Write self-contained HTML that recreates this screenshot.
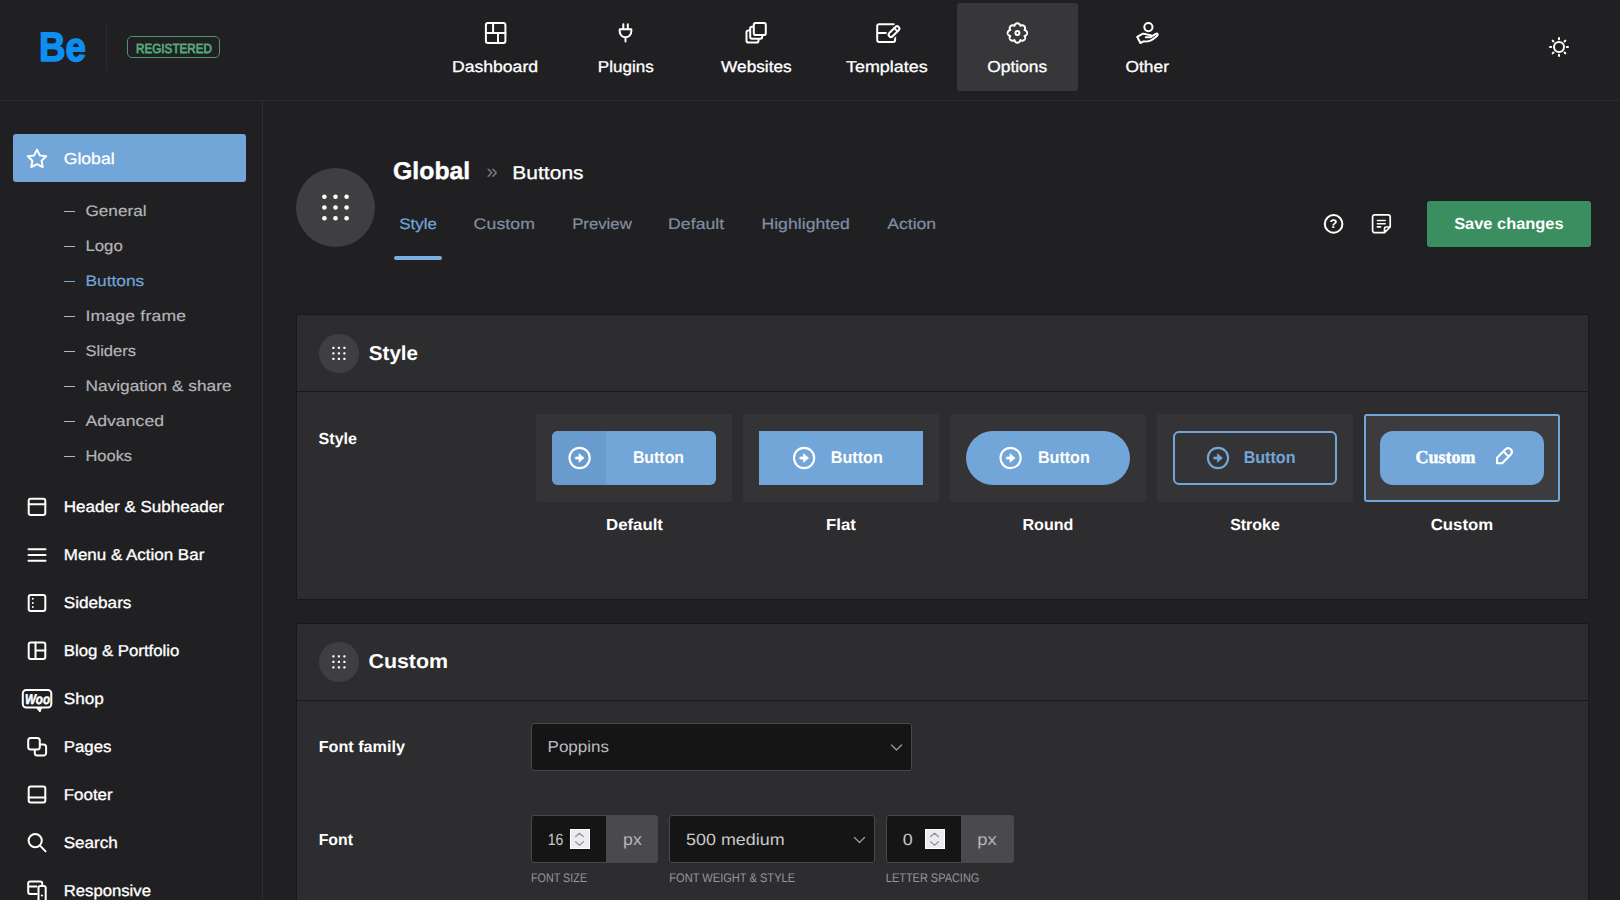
<!DOCTYPE html>
<html><head><meta charset="utf-8"><title>Betheme Options</title>
<style>
*{margin:0;padding:0;box-sizing:border-box}
html,body{width:1620px;height:900px;overflow:hidden;background:#202022;font-family:"Liberation Sans",sans-serif}
.t{position:absolute;white-space:pre;font-family:"Liberation Sans",sans-serif;text-rendering:geometricPrecision}
.b{position:absolute}
svg{position:absolute;overflow:visible}
</style></head><body>
<!-- header -->
<div class="b" style="left:0;top:100px;width:1620px;height:1px;background:#2c2c2e"></div>
<div class="b" style="left:262px;top:101px;width:1px;height:799px;background:#2c2c2e"></div>
<div class="b" style="left:106px;top:24px;width:1px;height:46px;background:#2c2c2e"></div>
<div class="b" style="left:127px;top:36px;width:93px;height:22px;border:1.6px solid #4d9470;border-radius:5px"></div>
<div class="b" style="left:957px;top:3.3px;width:120.5px;height:87.4px;background:#373739;border-radius:3px"></div>
<!-- sidebar active -->
<div class="b" style="left:13px;top:134px;width:233px;height:48px;background:#72a5d8;border-radius:3px"></div>
<div class="b" style="left:64.2px;top:210.55px;width:11.2px;height:1.3px;background:#b4b4b8"></div>
<div class="b" style="left:64.2px;top:245.55px;width:11.2px;height:1.3px;background:#b4b4b8"></div>
<div class="b" style="left:64.2px;top:280.55px;width:11.2px;height:1.3px;background:#72a5d8"></div>
<div class="b" style="left:64.2px;top:315.55px;width:11.2px;height:1.3px;background:#b4b4b8"></div>
<div class="b" style="left:64.2px;top:350.55px;width:11.2px;height:1.3px;background:#b4b4b8"></div>
<div class="b" style="left:64.2px;top:385.55px;width:11.2px;height:1.3px;background:#b4b4b8"></div>
<div class="b" style="left:64.2px;top:420.55px;width:11.2px;height:1.3px;background:#b4b4b8"></div>
<div class="b" style="left:64.2px;top:455.55px;width:11.2px;height:1.3px;background:#b4b4b8"></div>
<!-- title -->
<div class="b" style="left:296px;top:167.9px;width:79.2px;height:79.2px;border-radius:50%;background:#3f3f41"></div>
<div class="b" style="left:394px;top:256.3px;width:47.8px;height:3.3px;border-radius:2px;background:#7cade0"></div>
<div class="b" style="left:1427px;top:201px;width:164px;height:46px;border-radius:3px;background:#3a8e60"></div>
<!-- panels -->
<div class="b" style="left:296px;top:314px;width:1293px;height:286px;background:#2d2d2f;border:1px solid #18181a;border-radius:2px"></div>
<div class="b" style="left:297px;top:391px;width:1291px;height:1px;background:#18181a"></div>
<div class="b" style="left:296px;top:623px;width:1293px;height:290px;background:#2d2d2f;border:1px solid #18181a;border-radius:2px"></div>
<div class="b" style="left:297px;top:700px;width:1291px;height:1px;background:#18181a"></div>
<div class="b" style="left:319.2px;top:333.5px;width:39.5px;height:39.5px;border-radius:50%;background:#3f3f41"></div>
<div class="b" style="left:319.2px;top:642px;width:39.5px;height:39.5px;border-radius:50%;background:#3f3f41"></div>
<!-- cards -->
<div class="b" style="left:536px;top:414px;width:196px;height:88px;background:#343436;border-radius:2px"></div>
<div class="b" style="left:743px;top:414px;width:196px;height:88px;background:#343436;border-radius:2px"></div>
<div class="b" style="left:950px;top:414px;width:196px;height:88px;background:#343436;border-radius:2px"></div>
<div class="b" style="left:1157px;top:414px;width:196px;height:88px;background:#343436;border-radius:2px"></div>
<div class="b" style="left:1364px;top:414px;width:196px;height:88px;background:#3c3c3e;border:2px solid #72a5d8;border-radius:3px"></div>
<!-- buttons -->
<div class="b" style="left:552px;top:430.5px;width:164px;height:54.5px;background:#72a5d8;border-radius:6px;overflow:hidden"><div style="width:54px;height:54px;background:#6a9bce"></div></div>
<div class="b" style="left:759px;top:430.5px;width:164px;height:54.5px;background:#72a5d8"></div>
<div class="b" style="left:966px;top:430.5px;width:164px;height:54.5px;background:#72a5d8;border-radius:27px"></div>
<div class="b" style="left:1173px;top:430.5px;width:164px;height:54.5px;border:2px solid #72a5d8;border-radius:6px"></div>
<div class="b" style="left:1380px;top:430.5px;width:164px;height:54.5px;background:#72a5d8;border-radius:13px"></div>
<!-- inputs -->
<div class="b" style="left:531px;top:723px;width:381px;height:48px;background:#151515;border:1px solid #48484b;border-radius:3px"></div>
<div class="b" style="left:531px;top:815px;width:127px;height:48px;background:#4a4a4e;border:1px solid #48484b;border-radius:3px"></div>
<div class="b" style="left:532px;top:816px;width:74px;height:46px;background:#151515;border-radius:2px 0 0 2px"></div>
<div class="b" style="left:669px;top:815px;width:206px;height:48px;background:#151515;border:1px solid #48484b;border-radius:3px"></div>
<div class="b" style="left:886px;top:815px;width:128px;height:48px;background:#4a4a4e;border:1px solid #48484b;border-radius:3px"></div>
<div class="b" style="left:887px;top:816px;width:74px;height:46px;background:#151515;border-radius:2px 0 0 2px"></div>
<div class="b" style="left:569.5px;top:829px;width:20px;height:20px;background:#ebebf0;border:1px solid #fff"></div>
<div class="b" style="left:924.5px;top:829px;width:20px;height:20px;background:#ebebf0;border:1px solid #fff"></div>
<!-- SVG overlay: all icons -->
<svg width="1620" height="900" viewBox="0 0 1620 900" style="left:0;top:0" fill="none" stroke="#fff" stroke-width="2" stroke-linecap="round" stroke-linejoin="round">
<!-- dashboard -->
<rect x="485.9" y="22.9" width="19.5" height="20.2" rx="2"/><path d="M485.9 33.1H505.4M493.1 22.9V33.1M498 33.1V43.1"/>
<!-- plugins -->
<path d="M623.3 24.3V29.3M627.8 24.3V29.3M619.7 29.3H631.3M619.7 29.3V31.5A5.8 5.8 0 0 0 631.3 31.5V29.3M625.5 37.3V41.6"/>
<!-- websites -->
<g fill="#202022"><rect x="746.5" y="30.5" width="12" height="12" rx="1.8"/><rect x="750.2" y="26.8" width="12" height="12" rx="1.8"/><rect x="753.8" y="23.1" width="12" height="12" rx="1.8"/></g>
<!-- templates -->
<path d="M895.1 27V26.3A2 2 0 0 0 893.1 24.3H879.2A2 2 0 0 0 877.2 26.3V39.9A2 2 0 0 0 879.2 41.9H893.1A2 2 0 0 0 895.1 39.9V34M877.2 33.1H889"/>
<g transform="translate(894 31.6) rotate(-45)"><rect x="-6.6" y="-2.3" width="13.2" height="4.6" rx="2.3" fill="#202022" stroke="#202022" stroke-width="5"/><rect x="-6.6" y="-2.3" width="13.2" height="4.6" rx="2.3" fill="#202022"/><path d="M2.6 -2.3V2.3"/></g>
<!-- options gear -->
<path d="M1027.10 33.00L1027.07 33.38L1027.00 33.76L1026.87 34.12L1026.69 34.47L1026.46 34.80L1026.19 35.11L1025.88 35.39L1025.51 35.64L1025.09 35.84L1024.51 35.95L1024.84 36.43L1025.00 36.87L1025.08 37.30L1025.11 37.72L1025.08 38.13L1025.01 38.53L1024.89 38.90L1024.72 39.25L1024.51 39.57L1024.26 39.86L1023.97 40.11L1023.65 40.32L1023.30 40.49L1022.93 40.61L1022.53 40.68L1022.12 40.71L1021.70 40.68L1021.27 40.60L1020.83 40.44L1020.35 40.11L1020.24 40.69L1020.04 41.11L1019.79 41.48L1019.51 41.79L1019.20 42.06L1018.87 42.29L1018.52 42.47L1018.16 42.60L1017.78 42.67L1017.40 42.70L1017.02 42.67L1016.64 42.60L1016.28 42.47L1015.93 42.29L1015.60 42.06L1015.29 41.79L1015.01 41.48L1014.76 41.11L1014.56 40.69L1014.45 40.11L1013.97 40.44L1013.53 40.60L1013.10 40.68L1012.68 40.71L1012.27 40.68L1011.87 40.61L1011.50 40.49L1011.15 40.32L1010.83 40.11L1010.54 39.86L1010.29 39.57L1010.08 39.25L1009.91 38.90L1009.79 38.53L1009.72 38.13L1009.69 37.72L1009.72 37.30L1009.80 36.87L1009.96 36.43L1010.29 35.95L1009.71 35.84L1009.29 35.64L1008.92 35.39L1008.61 35.11L1008.34 34.80L1008.11 34.47L1007.93 34.12L1007.80 33.76L1007.73 33.38L1007.70 33.00L1007.73 32.62L1007.80 32.24L1007.93 31.88L1008.11 31.53L1008.34 31.20L1008.61 30.89L1008.92 30.61L1009.29 30.36L1009.71 30.16L1010.29 30.05L1009.96 29.57L1009.80 29.13L1009.72 28.70L1009.69 28.28L1009.72 27.87L1009.79 27.47L1009.91 27.10L1010.08 26.75L1010.29 26.43L1010.54 26.14L1010.83 25.89L1011.15 25.68L1011.50 25.51L1011.87 25.39L1012.27 25.32L1012.68 25.29L1013.10 25.32L1013.53 25.40L1013.97 25.56L1014.45 25.89L1014.56 25.31L1014.76 24.89L1015.01 24.52L1015.29 24.21L1015.60 23.94L1015.93 23.71L1016.28 23.53L1016.64 23.40L1017.02 23.33L1017.40 23.30L1017.78 23.33L1018.16 23.40L1018.52 23.53L1018.87 23.71L1019.20 23.94L1019.51 24.21L1019.79 24.52L1020.04 24.89L1020.24 25.31L1020.35 25.89L1020.83 25.56L1021.27 25.40L1021.70 25.32L1022.12 25.29L1022.53 25.32L1022.93 25.39L1023.30 25.51L1023.65 25.68L1023.97 25.89L1024.26 26.14L1024.51 26.43L1024.72 26.75L1024.89 27.10L1025.01 27.47L1025.08 27.87L1025.11 28.28L1025.08 28.70L1025.00 29.13L1024.84 29.57L1024.51 30.05L1025.09 30.16L1025.51 30.36L1025.88 30.61L1026.19 30.89L1026.46 31.20L1026.69 31.53L1026.87 31.88L1027.00 32.24L1027.07 32.62Z"/>
<circle cx="1017.4" cy="33" r="2"/>
<!-- other -->
<circle cx="1148.4" cy="27.1" r="4.1"/>
<path d="M1140.4 43L1137.2 36.8L1142.5 33.8C1145 33.5 1147 34.6 1150 35C1152 35.3 1151.8 37.3 1150 37.3L1145.8 37.3M1150.8 36.9L1155.8 33.8C1157.5 33 1158.4 34.6 1157.2 35.7C1154 38.6 1151 41 1148 41.3L1143 41.6L1140.4 43"/>
<!-- sun -->
<circle cx="1559" cy="47" r="5"/>
<path d="M1566.80 47.00L1568.00 47.00M1564.52 52.52L1565.36 53.36M1559.00 54.80L1559.00 56.00M1553.48 52.52L1552.64 53.36M1551.20 47.00L1550.00 47.00M1553.48 41.48L1552.64 40.64M1559.00 39.20L1559.00 38.00M1564.52 41.48L1565.36 40.64"/>
<!-- star -->
<path d="M37 149.6L39.8 155.4L46.2 156.3L41.6 160.8L42.7 167.1L37 164.1L31.3 167.1L32.4 160.8L27.8 156.3L34.2 155.4Z"/>
<!-- header -->
<rect x="28.7" y="498.7" width="16.6" height="16.4" rx="2"/><path d="M28.7 504.2H45.3"/>
<!-- menu -->
<path d="M28.5 549.2H45.5M28.5 555H45.5M28.5 560.8H45.5"/>
<!-- sidebars -->
<rect x="28.7" y="594.9" width="16.6" height="16.2" rx="2"/>
<!-- blog -->
<rect x="28.7" y="642.5" width="16.6" height="16.6" rx="2"/><path d="M35.5 642.5V659.1M35.5 650.4H45.3"/>
<!-- woo -->
<rect x="22.8" y="689.9" width="28.5" height="17.7" rx="3.5"/><path d="M36.6 708L40 712L41.5 708Z" fill="#fff" stroke-width="1"/>
<!-- pages -->
<rect x="28.2" y="737.9" width="11.6" height="11.6" rx="2.5"/><path d="M40.7 744.5H43.6A2.5 2.5 0 0 1 46.1 747V753.1A2.5 2.5 0 0 1 43.6 755.6H37.3A2.5 2.5 0 0 1 34.8 753.1V750.4"/>
<!-- footer -->
<rect x="28.7" y="786.6" width="16.6" height="16" rx="2"/><path d="M28.7 797.5H45.3"/>
<!-- search -->
<circle cx="35.2" cy="840.6" r="6.6"/><path d="M40 845.6L45.6 851.4"/>
<!-- responsive -->
<path d="M42.2 884.5V883.5A2 2 0 0 0 40.2 881.5H30.2A2 2 0 0 0 28.2 883.5V891.9A2 2 0 0 0 30.2 893.9H36.6M28.2 886.6H36.6"/>
<rect x="38.5" y="886.1" width="7.2" height="16" rx="2"/>
<!-- help -->
<circle cx="1333.6" cy="223.9" r="8.8"/>
<!-- note -->
<path d="M1390.2 227V217A2.2 2.2 0 0 0 1388 214.8H1374.8A2.2 2.2 0 0 0 1372.6 217V230.5A2.2 2.2 0 0 0 1374.8 232.7H1384.5L1390.2 227H1386A1.5 1.5 0 0 0 1384.5 228.5V232.7" stroke-width="1.7"/>
<path d="M1377.4 220.5H1385.2M1377.4 223.7H1385.2M1377.4 226.9H1380.6" stroke-width="1.6"/>
<!-- arrow circles -->
<g stroke-width="2.1">
<circle cx="579.6" cy="458" r="10.1" fill="none"/><path d="M575.7 457.0H579.0V453.7L584.1 458L579.0 462.3V459.0H575.7Z" fill="#fff" stroke-width="0.7"/>
<circle cx="804.1" cy="458" r="10.1" fill="none"/><path d="M800.2 457.0H803.5V453.7L808.6 458L803.5 462.3V459.0H800.2Z" fill="#fff" stroke-width="0.7"/>
<circle cx="1010.6" cy="458" r="10.1" fill="none"/><path d="M1006.7 457.0H1010.0V453.7L1015.1 458L1010.0 462.3V459.0H1006.7Z" fill="#fff" stroke-width="0.7"/>
<g stroke="#72a5d8"><circle cx="1218" cy="458" r="10.1" fill="none"/><path d="M1214.1 457.0H1217.4V453.7L1222.5 458L1217.4 462.3V459.0H1214.1Z" fill="#72a5d8" stroke-width="0.7"/></g>
<!-- pencil -->
<path d="M1497 463.2V457.8L1505.8 449A3.7 3.7 0 0 1 1511 454.2L1502.3 463.2ZM1503.6 451.6L1508.6 456.6"/>
</g>
<!-- chevrons -->
<g stroke="#969696" stroke-width="1.4">
<path d="M891.5 745L896.5 750L901.5 745"/>
<path d="M854.5 837.5L859.5 842.5L864.5 837.5"/>
</g>
<g stroke="#9696a0" stroke-width="1.3">
<path d="M575.6 836.6L579.5 833.2L583.4 836.6M575.6 841.8L579.5 845.2L583.4 841.8"/>
<path d="M930.6 836.6L934.5 833.2L938.4 836.6M930.6 841.8L934.5 845.2L938.4 841.8"/>
</g>
<!-- dots -->
<g fill="#fff" stroke="none">
<circle cx="324.4" cy="196.7" r="2.3"/><circle cx="335.5" cy="196.7" r="2.3"/><circle cx="346.6" cy="196.7" r="2.3"/>
<circle cx="324.4" cy="207.5" r="2.3"/><circle cx="335.5" cy="207.5" r="2.3"/><circle cx="346.6" cy="207.5" r="2.3"/>
<circle cx="324.4" cy="218.3" r="2.3"/><circle cx="335.5" cy="218.3" r="2.3"/><circle cx="346.6" cy="218.3" r="2.3"/>
<circle cx="32.8" cy="598.8" r="1"/><circle cx="32.8" cy="602.9" r="1"/><circle cx="32.8" cy="607" r="1"/>
<circle cx="41.9" cy="895.5" r="1.1"/>
<rect x="332.25" y="346.65" width="2.3" height="2.3" rx="0.8"/><rect x="332.25" y="352.15" width="2.3" height="2.3" rx="0.8"/><rect x="332.25" y="357.65" width="2.3" height="2.3" rx="0.8"/><rect x="337.75" y="346.65" width="2.3" height="2.3" rx="0.8"/><rect x="337.75" y="352.15" width="2.3" height="2.3" rx="0.8"/><rect x="337.75" y="357.65" width="2.3" height="2.3" rx="0.8"/><rect x="343.25" y="346.65" width="2.3" height="2.3" rx="0.8"/><rect x="343.25" y="352.15" width="2.3" height="2.3" rx="0.8"/><rect x="343.25" y="357.65" width="2.3" height="2.3" rx="0.8"/><rect x="332.25" y="655.15" width="2.3" height="2.3" rx="0.8"/><rect x="332.25" y="660.65" width="2.3" height="2.3" rx="0.8"/><rect x="332.25" y="666.15" width="2.3" height="2.3" rx="0.8"/><rect x="337.75" y="655.15" width="2.3" height="2.3" rx="0.8"/><rect x="337.75" y="660.65" width="2.3" height="2.3" rx="0.8"/><rect x="337.75" y="666.15" width="2.3" height="2.3" rx="0.8"/><rect x="343.25" y="655.15" width="2.3" height="2.3" rx="0.8"/><rect x="343.25" y="660.65" width="2.3" height="2.3" rx="0.8"/><rect x="343.25" y="666.15" width="2.3" height="2.3" rx="0.8"/>
</g>
</svg>

<svg width="1620" height="900" viewBox="0 0 1620 900" style="left:0;top:0;text-rendering:geometricPrecision" font-family="Liberation Sans, sans-serif" stroke-linejoin="round">
<text transform="translate(38.95 60.60) scale(1 1.1180)" font-size="36.67" fill="#0d8ff2" font-weight="700" stroke="#0d8ff2" stroke-width="1.3">Be</text>
<text transform="translate(136.07 52.60) scale(1 1.1297)" font-size="11.68" fill="#55a87a" stroke="#55a87a" stroke-width="0.7">REGISTERED</text>
<text transform="translate(451.91 72.00) scale(1 0.8973)" font-size="17.61" fill="#ffffff" stroke="#ffffff" stroke-width="0.35">Dashboard</text>
<text transform="translate(597.83 72.00) scale(1 0.9282)" font-size="17.02" fill="#ffffff" stroke="#ffffff" stroke-width="0.35">Plugins</text>
<text transform="translate(721.12 72.00) scale(1 0.9173)" font-size="17.23" fill="#ffffff" stroke="#ffffff" stroke-width="0.35">Websites</text>
<text transform="translate(845.99 72.00) scale(1 0.8821)" font-size="17.91" fill="#ffffff" stroke="#ffffff" stroke-width="0.35">Templates</text>
<text transform="translate(987.22 72.00) scale(1 0.9087)" font-size="17.39" fill="#ffffff" stroke="#ffffff" stroke-width="0.35">Options</text>
<text transform="translate(1125.52 72.00) scale(1 0.9100)" font-size="17.36" fill="#ffffff" stroke="#ffffff" stroke-width="0.35">Other</text>
<text transform="translate(63.71 164.00) scale(1 0.8969)" font-size="17.62" fill="#ffffff" stroke="#ffffff" stroke-width="0.35">Global</text>
<text transform="translate(85.43 216.00) scale(1 0.8836)" font-size="17.20" fill="#b4b4b8" stroke="#b4b4b8" stroke-width="0.2">General</text>
<text transform="translate(85.44 251.00) scale(1 0.9044)" font-size="16.81" fill="#b4b4b8" stroke="#b4b4b8" stroke-width="0.2">Logo</text>
<text transform="translate(85.42 286.00) scale(1 0.8751)" font-size="17.37" fill="#72a5d8" stroke="#72a5d8" stroke-width="0.2">Buttons</text>
<text transform="translate(85.41 321.00) scale(1 0.8621)" font-size="17.63" fill="#b4b4b8" letter-spacing="0.18" stroke="#b4b4b8" stroke-width="0.2">Image frame</text>
<text transform="translate(85.45 356.00) scale(1 0.9165)" font-size="16.58" fill="#b4b4b8" stroke="#b4b4b8" stroke-width="0.2">Sliders</text>
<text transform="translate(85.42 391.00) scale(1 0.8779)" font-size="17.31" fill="#b4b4b8" stroke="#b4b4b8" stroke-width="0.2">Navigation &amp; share</text>
<text transform="translate(85.41 426.00) scale(1 0.8621)" font-size="17.63" fill="#b4b4b8" letter-spacing="0.04" stroke="#b4b4b8" stroke-width="0.2">Advanced</text>
<text transform="translate(85.46 461.00) scale(1 0.9227)" font-size="16.47" fill="#b4b4b8" stroke="#b4b4b8" stroke-width="0.2">Hooks</text>
<text transform="translate(63.73 512.00) scale(1 0.9264)" font-size="17.06" fill="#ffffff" stroke="#ffffff" stroke-width="0.35">Header &amp; Subheader</text>
<text transform="translate(63.74 560.00) scale(1 0.9305)" font-size="16.98" fill="#ffffff" stroke="#ffffff" stroke-width="0.35">Menu &amp; Action Bar</text>
<text transform="translate(63.73 608.00) scale(1 0.9208)" font-size="17.16" fill="#ffffff" stroke="#ffffff" stroke-width="0.35">Sidebars</text>
<text transform="translate(63.74 656.00) scale(1 0.9410)" font-size="16.79" fill="#ffffff" stroke="#ffffff" stroke-width="0.35">Blog &amp; Portfolio</text>
<text transform="translate(63.73 704.00) scale(1 0.9176)" font-size="17.22" fill="#ffffff" stroke="#ffffff" stroke-width="0.35">Shop</text>
<text transform="translate(63.74 752.00) scale(1 0.9387)" font-size="16.83" fill="#ffffff" stroke="#ffffff" stroke-width="0.35">Pages</text>
<text transform="translate(63.74 800.00) scale(1 0.9332)" font-size="16.93" fill="#ffffff" stroke="#ffffff" stroke-width="0.35">Footer</text>
<text transform="translate(63.73 848.00) scale(1 0.9250)" font-size="17.08" fill="#ffffff" stroke="#ffffff" stroke-width="0.35">Search</text>
<text transform="translate(63.75 896.00) scale(1 0.9464)" font-size="16.69" fill="#ffffff" stroke="#ffffff" stroke-width="0.35">Responsive</text>
<text transform="translate(393.08 179.00) scale(1 0.9752)" font-size="24.81" fill="#ffffff" font-weight="700" stroke="#ffffff" stroke-width="0.4">Global</text>
<text transform="translate(486.39 178.00) scale(1 0.9933)" font-size="20.13" fill="#7a7a7e">»</text>
<text transform="translate(512.35 179.00) scale(1 0.8805)" font-size="21.01" fill="#ffffff" stroke="#ffffff" stroke-width="0.3">Buttons</text>
<text transform="translate(399.24 229.00) scale(1 0.8988)" font-size="16.91" fill="#72a5d8" stroke="#72a5d8" stroke-width="0.25">Style</text>
<text transform="translate(473.61 229.00) scale(1 0.8621)" font-size="17.63" fill="#7f8ea3" letter-spacing="0.13" stroke="#7f8ea3" stroke-width="0.25">Custom</text>
<text transform="translate(572.15 229.00) scale(1 0.9071)" font-size="16.76" fill="#7f8ea3" stroke="#7f8ea3" stroke-width="0.25">Preview</text>
<text transform="translate(668.11 229.00) scale(1 0.8621)" font-size="17.63" fill="#7f8ea3" letter-spacing="0.04" stroke="#7f8ea3" stroke-width="0.25">Default</text>
<text transform="translate(761.41 229.00) scale(1 0.8621)" font-size="17.63" fill="#7f8ea3" letter-spacing="0.03" stroke="#7f8ea3" stroke-width="0.25">Highlighted</text>
<text transform="translate(887.21 229.00) scale(1 0.8622)" font-size="17.63" fill="#7f8ea3" stroke="#7f8ea3" stroke-width="0.25">Action</text>
<text transform="translate(1454.16 229.00) scale(1 0.9753)" font-size="16.41" fill="#ffffff" font-weight="700">Save changes</text>
<text transform="translate(368.77 360.00) scale(1 0.9787)" font-size="20.64" fill="#ffffff" font-weight="700">Style</text>
<text transform="translate(318.58 444.00) scale(1 0.9951)" font-size="16.08" fill="#ffffff" font-weight="700">Style</text>
<text transform="translate(606.05 530.00) scale(1 0.9542)" font-size="16.77" fill="#ffffff" font-weight="700">Default</text>
<text transform="translate(825.99 530.00) scale(1 0.9503)" font-size="16.84" fill="#ffffff" font-weight="700">Flat</text>
<text transform="translate(1022.47 530.00) scale(1 0.9925)" font-size="16.12" fill="#ffffff" font-weight="700">Round</text>
<text transform="translate(1230.13 530.00) scale(1 1.0011)" font-size="15.98" fill="#ffffff" font-weight="700">Stroke</text>
<text transform="translate(1430.75 530.00) scale(1 0.9539)" font-size="16.77" fill="#ffffff" font-weight="700">Custom</text>
<text transform="translate(632.88 463.00) scale(1 1.0690)" font-size="15.90" fill="#ffffff" font-weight="700">Button</text>
<text transform="translate(830.77 463.00) scale(1 1.0526)" font-size="16.15" fill="#ffffff" font-weight="700">Button</text>
<text transform="translate(1037.98 463.00) scale(1 1.0566)" font-size="16.09" fill="#ffffff" font-weight="700">Button</text>
<text transform="translate(1243.68 463.00) scale(1 1.0566)" font-size="16.09" fill="#72a5d8" font-weight="700">Button</text>
<text transform="translate(1415.49 463.00) scale(1 1.0117)" font-size="17.99" fill="#ffffff" font-weight="700" font-family="Liberation Serif, serif" stroke="#ffffff" stroke-width="0.45">Custom</text>
<text transform="translate(368.44 668.00) scale(1 0.9440)" font-size="21.40" fill="#ffffff" font-weight="700">Custom</text>
<text transform="translate(318.67 752.00) scale(1 0.9885)" font-size="16.19" fill="#ffffff" font-weight="700">Font family</text>
<text transform="translate(547.53 752.00) scale(1 0.9397)" font-size="17.03" fill="#bcbcc0">Poppins</text>
<text transform="translate(318.69 845.00) scale(1 1.0092)" font-size="15.85" fill="#ffffff" font-weight="700">Font</text>
<text transform="translate(547.67 845.00) scale(1 1.1506)" font-size="14.08" fill="#c8c8cc">16</text>
<text transform="translate(623.10 845.00) scale(1 0.9283)" font-size="17.78" fill="#b4b4ba">px</text>
<text transform="translate(686.09 845.00) scale(1 0.9049)" font-size="17.90" fill="#c8c8cc">500 medium</text>
<text transform="translate(902.69 845.00) scale(1 0.9054)" font-size="17.89" fill="#c8c8cc">0</text>
<text transform="translate(977.27 845.00) scale(1 0.8995)" font-size="18.34" fill="#b4b4ba">px</text>
<text transform="translate(530.91 882.00) scale(1 1.1572)" font-size="10.80" fill="#96969e">FONT SIZE</text>
<text transform="translate(669.30 882.00) scale(1 1.1270)" font-size="11.09" fill="#96969e">FONT WEIGHT &amp; STYLE</text>
<text transform="translate(885.81 882.00) scale(1 1.1400)" font-size="10.96" fill="#96969e">LETTER SPACING</text>
<text transform="translate(1329.62 228.20) scale(1 0.9641)" font-size="12.97" fill="#ffffff" font-weight="700">?</text>
<text transform="translate(25.08 704.00) scale(1 1.2051)" font-size="11.62" fill="#ffffff" font-weight="700" stroke="#ffffff" stroke-width="0.5" font-style="italic">Woo</text>
</svg>
</body></html>
